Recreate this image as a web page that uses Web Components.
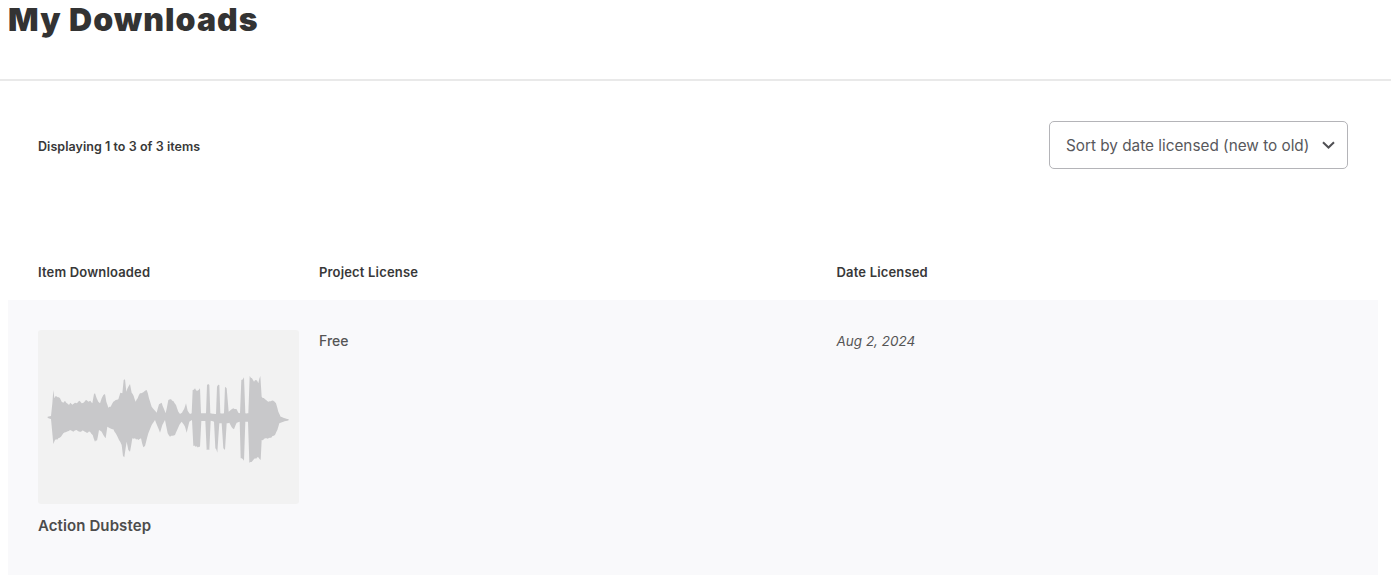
<!DOCTYPE html>
<html lang="en">
<head>
<meta charset="utf-8">
<title>My Downloads</title>
<style>
html,body{margin:0;padding:0;background:#fff}
body{font-family:Inter,"Liberation Sans",sans-serif;color:#333;height:585px;overflow:hidden}
</style>
</head>
<body>
<dl-page>
  <dl-header slot="header">My Downloads</dl-header>
  <dl-toolbar slot="toolbar" label="Sort by date licensed (new to old)">Displaying 1 to 3 of 3 items</dl-toolbar>
  <dl-table slot="table">
    <dl-row item="Action Dubstep" license="Free" date="Aug 2, 2024"></dl-row>
  </dl-table>
</dl-page>
<script>
function define(name, html){
  customElements.define(name, class extends HTMLElement{
    constructor(){super();this.attachShadow({mode:'open'}).innerHTML=html;}
    connectedCallback(){
      this.shadowRoot.querySelectorAll('[data-attr]').forEach(n=>{n.textContent=this.getAttribute(n.dataset.attr)||'';});
    }
  });
}
define('dl-page',`<style>:host{display:block}</style>
<slot name="header"></slot><slot name="toolbar"></slot><slot name="table"></slot>`);

define('dl-header',`<style>
:host{display:block;height:79px;border-bottom:2px solid #e9e9e9;padding-left:8px;box-sizing:content-box}
h1{margin:0;font:900 32px/40px Inter,"Liberation Sans",sans-serif;color:#333;letter-spacing:1.08px}
</style><h1><slot></slot></h1>`);

define('dl-toolbar',`<style>
:host{display:flex;justify-content:space-between;align-items:center;padding:40px 43px 0 38px;height:48px}
.count{font:600 12.5px/20px Inter,"Liberation Sans",sans-serif;color:#383838;letter-spacing:.05px;padding-top:3px}
.select{display:flex;align-items:center;justify-content:space-between;box-sizing:border-box;width:299px;height:48px;padding:0 12px 0 16px;border:1px solid #b4b4b8;border-radius:5px;font:400 15.300px/24px Inter,"Liberation Sans",sans-serif;color:#58585c;background:#fff;white-space:nowrap}
.select span{padding-top:1px}
svg{display:block;flex:none}
</style><span class="count"><slot></slot></span>
<div class="select"><span data-attr="label"></span>
<svg width="13" height="8" viewBox="0 0 13 8"><path d="M1 1.200 6.500 6.500 12 1.200" fill="none" stroke="#505054" stroke-width="2"/></svg></div>`);

define('dl-table',`<style>
:host{display:block;margin:0 13px 0 8px;padding-top:95px}
.head{display:grid;grid-template-columns:281px 517.500px 1fr;padding:0 30px;height:36px;font:600 13px/16px Inter,"Liberation Sans",sans-serif;color:#383838;letter-spacing:.17px}
</style><div class="head"><span>Item Downloaded</span><span>Project License</span><span>Date Licensed</span></div><slot></slot>`);

/* Waveform envelope traced from the reference, as [left-part, right-part] runs in 3x crop units. */
const L=s=>s.split(' ').map(p=>{const [x,y]=p.split(',').map(Number);return [45+x/3,370+y/3];});
const R=s=>s.split(' ').map(p=>{const [x,y]=p.split(',').map(Number);return [170+x/3,370+y/3];});
const upper=[...L('8,140 18,138 22,100 25,60 28,85 32,78 38,82 45,85 50,95 55,98 60,92 66,100 72,105 76,98 82,104 90,98 96,100 103,92 110,100 118,96 124,90 130,95 136,92 142,100 147,72 150,70 155,85 160,95 165,100 170,85 175,75 180,72 184,95 190,113 197,110 205,95 212,90 220,88 226,68 232,70 236,30 240,28 244,65 250,50 255,42 260,68 266,78 272,95 278,85 285,70 292,68 300,62 305,60 312,85 320,110 328,120 335,128 342,103 350,98 356,115 362,130 370,90'),
 ...R('0,88 10,93 18,105 25,125 30,132 36,128 42,118 48,100 53,122 60,132 65,130 68,60 75,55 82,62 90,55 93,130 108,130 111,45 118,45 121,130 138,132 141,50 148,45 151,130 162,130 165,50 170,55 176,125 185,118 190,115 200,118 205,128 210,130 214,30 222,22 226,130 235,130 239,18 246,25 252,35 258,30 265,40 271,18 275,80 285,88 295,95 310,92 318,100 325,125 332,140 345,145 356,148')];
const lower=[...R('356,151 340,155 328,160 322,180 315,195 300,203 290,205 275,210 272,270 265,262 255,265 248,272 238,278 234,155 226,155 222,272 212,265 209,155 200,158 192,178 185,172 178,158 170,160 165,240 160,235 155,160 148,160 142,248 136,235 132,155 122,152 118,240 110,240 106,153 94,153 90,230 70,228 66,150 58,155 50,188 45,170 35,155 28,165 15,195 0,200'),
 ...L('368,190 360,150 352,165 345,188 338,170 330,150 320,165 310,190 300,228 295,232 288,205 280,210 270,205 262,205 255,245 250,240 245,215 238,262 234,258 230,225 222,210 212,190 205,178 195,175 187,170 182,205 175,195 170,185 162,180 156,212 150,215 143,195 135,185 125,188 115,182 105,185 95,180 85,185 75,180 65,185 55,190 48,200 40,205 30,210 25,222 22,190 18,147 8,144')];

/* Adds the fine jagged edge of a real waveform to the traced envelope. */
function roughen(p){
  const out=[];let seed=11;
  const rnd=()=>{seed=(seed*16807)%2147483647;return seed/2147483647-.5;};
  for(let i=0;i<p.length-1;i++){
    const [x0,y0]=p[i],[x1,y1]=p[i+1];
    const n=Math.max(1,Math.round(Math.abs(x1-x0)/1.2));
    for(let k=0;k<n;k++){
      const t=k/n,y=y0+(y1-y0)*t,amp=Math.min(2,Math.abs(y-417.5)*.07);
      out.push((x0+(x1-x0)*t).toFixed(2)+','+(y+(k?rnd()*amp:0)).toFixed(2));
    }
  }
  out.push(p[p.length-1].join(','));
  return out.join(' ');
}
const wavePoints=roughen([...upper,...lower,upper[0]]);

define('dl-row',`<style>
:host{display:grid;grid-template-columns:281px 517.500px 1fr;box-sizing:border-box;height:275px;padding:30px 30px 0;background:#f9f9fb;font:400 14px/20px Inter,"Liberation Sans",sans-serif;color:#555}
.thumb{display:block;width:261px;height:174px;background:#f2f2f2;border-radius:3px}
.wave{filter:blur(.3px)}
.name{margin-top:12px;font:600 15px/20px Inter,"Liberation Sans",sans-serif;color:#4c4c4c;letter-spacing:.1px}
.lic{font-weight:500;padding-top:1px}
.date{font-style:italic;font-size:13.500px;padding-top:1px}
</style>
<div><svg class="thumb" viewBox="38 330 261 174" role="img" aria-label="Waveform"><polygon class="wave" fill="#c8c8ca" points="${wavePoints}"/></svg><div class="name" data-attr="item"></div></div>
<div class="lic" data-attr="license"></div>
<div class="date" data-attr="date"></div>`);
</script>
</body>
</html>
